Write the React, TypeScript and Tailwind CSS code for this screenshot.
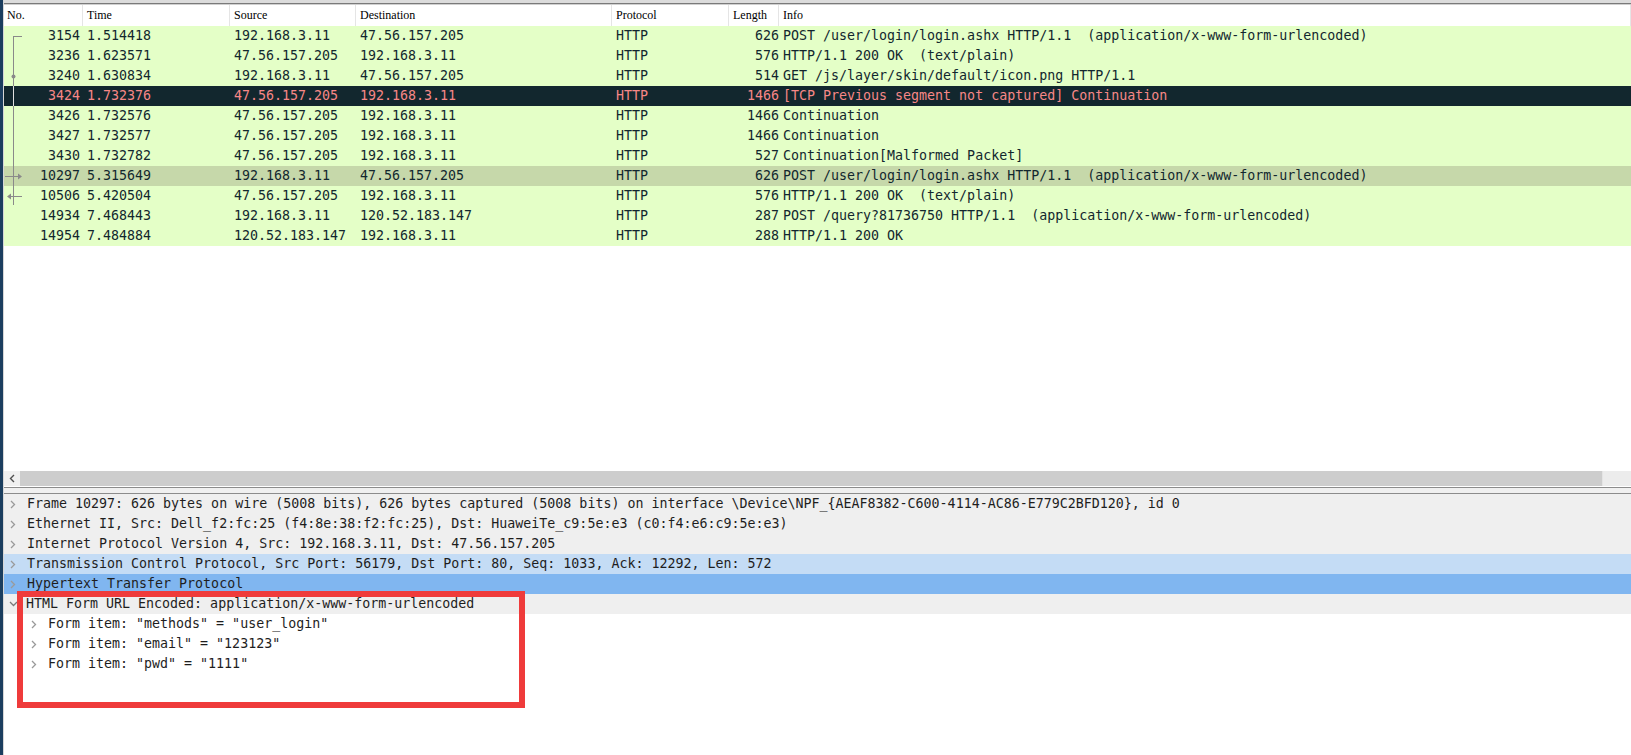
import React from 'react';

type Packet = {
  no: number;
  time: string;
  src: string;
  dst: string;
  proto: string;
  len: number;
  info: string;
  kind?: 'bad' | 'selected';
};

const packets: Packet[] = [
  { no: 3154, time: '1.514418', src: '192.168.3.11', dst: '47.56.157.205', proto: 'HTTP', len: 626, info: 'POST /user/login/login.ashx HTTP/1.1  (application/x-www-form-urlencoded)' },
  { no: 3236, time: '1.623571', src: '47.56.157.205', dst: '192.168.3.11', proto: 'HTTP', len: 576, info: 'HTTP/1.1 200 OK  (text/plain)' },
  { no: 3240, time: '1.630834', src: '192.168.3.11', dst: '47.56.157.205', proto: 'HTTP', len: 514, info: 'GET /js/layer/skin/default/icon.png HTTP/1.1' },
  { no: 3424, time: '1.732376', src: '47.56.157.205', dst: '192.168.3.11', proto: 'HTTP', len: 1466, info: '[TCP Previous segment not captured] Continuation', kind: 'bad' },
  { no: 3426, time: '1.732576', src: '47.56.157.205', dst: '192.168.3.11', proto: 'HTTP', len: 1466, info: 'Continuation' },
  { no: 3427, time: '1.732577', src: '47.56.157.205', dst: '192.168.3.11', proto: 'HTTP', len: 1466, info: 'Continuation' },
  { no: 3430, time: '1.732782', src: '47.56.157.205', dst: '192.168.3.11', proto: 'HTTP', len: 527, info: 'Continuation[Malformed Packet]' },
  { no: 10297, time: '5.315649', src: '192.168.3.11', dst: '47.56.157.205', proto: 'HTTP', len: 626, info: 'POST /user/login/login.ashx HTTP/1.1  (application/x-www-form-urlencoded)', kind: 'selected' },
  { no: 10506, time: '5.420504', src: '47.56.157.205', dst: '192.168.3.11', proto: 'HTTP', len: 576, info: 'HTTP/1.1 200 OK  (text/plain)' },
  { no: 14934, time: '7.468443', src: '192.168.3.11', dst: '120.52.183.147', proto: 'HTTP', len: 287, info: 'POST /query?81736750 HTTP/1.1  (application/x-www-form-urlencoded)' },
  { no: 14954, time: '7.484884', src: '120.52.183.147', dst: '192.168.3.11', proto: 'HTTP', len: 288, info: 'HTTP/1.1 200 OK' },
];

const headers = [
  { label: 'No.', cls: 'w-[79px] pl-[3px]' },
  { label: 'Time', cls: 'w-[147px] pl-[4px]' },
  { label: 'Source', cls: 'w-[126px] pl-[4px]' },
  { label: 'Destination', cls: 'w-[256px] pl-[4px]' },
  { label: 'Protocol', cls: 'w-[117px] pl-[4px]' },
  { label: 'Length', cls: 'w-[50px] pl-[4px]' },
  { label: 'Info', cls: 'flex-1 pl-[4px]' },
];

const Chevron = ({ open = false }: { open?: boolean }) =>
  open ? (
    <svg width="9" height="6" viewBox="0 0 9 6" className="block">
      <path d="M1 1 L4.5 4.5 L8 1" fill="none" stroke="#7a7a7a" strokeWidth="1.3" />
    </svg>
  ) : (
    <svg width="6" height="9" viewBox="0 0 6 9" className="block">
      <path d="M1 1 L4.5 4.5 L1 8" fill="none" stroke="#9a9a9a" strokeWidth="1.3" />
    </svg>
  );

const PacketRow = ({ p }: { p: Packet }) => {
  const bg = p.kind === 'bad' ? 'bg-[#12272e] text-[#f78787]' : p.kind === 'selected' ? 'bg-[#c6d8aa] text-[#12272e]' : 'bg-[#e4ffc7] text-[#12272e]';
  return (
    <div className={`flex h-5 items-center whitespace-pre ${bg}`}>
      <div className="w-[79px] pr-[3px] text-right">{p.no}</div>
      <div className="w-[147px] pl-[4px]">{p.time}</div>
      <div className="w-[126px] pl-[4px]">{p.src}</div>
      <div className="w-[256px] pl-[4px]">{p.dst}</div>
      <div className="w-[117px] pl-[4px]">{p.proto}</div>
      <div className="w-[50px] text-right">{p.len}</div>
      <div className="flex-1 pl-[4px]">{p.info}</div>
    </div>
  );
};

const TreeLines = () => (
  <svg width="24" height="220" viewBox="0 0 24 220" className="absolute left-0 top-0">
    <path d="M9.5 10 V60 M9.5 80 V179 M9.5 10.5 H18" stroke="#8a8a8a" strokeWidth="1" fill="none" />
    <path d="M9.5 60 V80" stroke="#e0e0e0" strokeWidth="1" />
    <circle cx="9.5" cy="50.5" r="2" fill="#8a8a8a" />
    <path d="M1 150.5 H15" stroke="#8a8a8a" strokeWidth="1" />
    <polygon points="14,147.5 18,150.5 14,153.5" fill="#8a8a8a" />
    <path d="M6 170.5 H18" stroke="#8a8a8a" strokeWidth="1" />
    <polygon points="7,167.5 3,170.5 7,173.5" fill="#8a8a8a" />
  </svg>
);

const DetailRow = ({ text, level = 0, open = false, bg = '' }: { text: string; level?: number; open?: boolean; bg?: string }) => (
  <div className={`flex h-5 items-center whitespace-pre text-[#1e1e1e] ${bg} ${level ? 'pl-[27px]' : 'pl-[6px]'}`}>
    <span className={`flex w-[17px] items-center ${open ? '-ml-[1px]' : ''}`}>
      <Chevron open={open} />
    </span>
    <span>{text}</span>
  </div>
);

export default function App() {
  return (
    <div className="relative flex h-[755px] w-[1631px] overflow-hidden bg-white font-['DejaVu_Sans_Mono',monospace] text-[13.3px] leading-5">
      <div className="w-[3px] bg-[#1b3e5f]" />
      <div className="w-px bg-[#d6d6d6]" />

      <main className="flex flex-1 flex-col">
        <div className="h-[3px] bg-[#dcdcdc]" />
        <div className="h-px bg-[#7a7a7a]" />
        <div className="h-px bg-[#d0d0d0]" />

        <div className="flex h-[21px] items-center bg-white font-['Liberation_Serif',serif] text-[12px] text-black">
          {headers.map(h => (
            <div key={h.label} className={`h-full border-r border-[#e5e5e5] leading-[21px] ${h.cls}`}>
              {h.label}
            </div>
          ))}
        </div>

        <div className="relative">
          {packets.map(p => (
            <PacketRow key={p.no} p={p} />
          ))}
          <TreeLines />
        </div>

        <div className="h-[225px] bg-white" />

        <div className="flex h-[15px] items-stretch bg-[#f0f0f0]">
          <div className="flex w-[16px] items-center justify-center">
            <svg width="6" height="9" viewBox="0 0 6 9">
              <path d="M5 1 L1.5 4.5 L5 8" fill="none" stroke="#505050" strokeWidth="1.4" />
            </svg>
          </div>
          <div className="w-[1582px] bg-[#cdcdcd]" />
          <div className="flex-1 border-l border-[#e4e4e4] bg-[#ececec]" />
        </div>

        <div className="h-px bg-white" />
        <div className="h-px bg-[#8c8c8c]" />
        <div className="h-[5px] bg-[#f0f0f0]" />
        <div className="h-px bg-[#8c8c8c]" />

        <div className="flex flex-col">
          <DetailRow bg="bg-[#efefef]" text="Frame 10297: 626 bytes on wire (5008 bits), 626 bytes captured (5008 bits) on interface \Device\NPF_{AEAF8382-C600-4114-AC86-E779C2BFD120}, id 0" />
          <DetailRow bg="bg-[#efefef]" text="Ethernet II, Src: Dell_f2:fc:25 (f4:8e:38:f2:fc:25), Dst: HuaweiTe_c9:5e:e3 (c0:f4:e6:c9:5e:e3)" />
          <DetailRow bg="bg-[#efefef]" text="Internet Protocol Version 4, Src: 192.168.3.11, Dst: 47.56.157.205" />
          <DetailRow bg="bg-[#c4dcf5]" text="Transmission Control Protocol, Src Port: 56179, Dst Port: 80, Seq: 1033, Ack: 12292, Len: 572" />
          <DetailRow bg="bg-[#80b6f0]" text="Hypertext Transfer Protocol" />
          <DetailRow bg="bg-[#efefef]" open text="HTML Form URL Encoded: application/x-www-form-urlencoded" />
          <DetailRow level={1} text={'Form item: "methods" = "user_login"'} />
          <DetailRow level={1} text={'Form item: "email" = "123123"'} />
          <DetailRow level={1} text={'Form item: "pwd" = "1111"'} />
        </div>
      </main>

      <div className="pointer-events-none absolute left-[17px] top-[591px] h-[117px] w-[508px] border-[6px] border-[#ef3b3b]" />
    </div>
  );
}
